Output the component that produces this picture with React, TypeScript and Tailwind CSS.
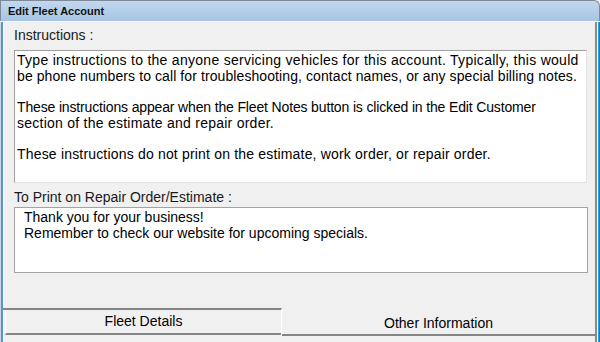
import React from 'react';

// per-line tracking so the Liberation widths line up with the original font
const notes = [
  { text: 'Type instructions to the anyone servicing vehicles for this account. Typically, this would', cls: 'tracking-[0.28px]' },
  { text: 'be phone numbers to call for troubleshooting, contact names, or any special billing notes.', cls: 'tracking-[0.09px]' },
  { text: '', cls: '' },
  { text: 'These instructions appear when the Fleet Notes button is clicked in the Edit Customer', cls: 'tracking-[-0.15px]' },
  { text: 'section of the estimate and repair order.', cls: 'tracking-[0.25px]' },
  { text: '', cls: '' },
  { text: 'These instructions do not print on the estimate, work order, or repair order.', cls: 'tracking-[0.18px]' },
];

const printLines = ['Thank you for your business!', 'Remember to check our website for upcoming specials.'];

export default function App() {
  return (
    <div className="w-[600px] h-[342px] flex flex-col bg-[#f0f0f0] overflow-hidden font-['Liberation_Sans',Arial,sans-serif] text-[14px] text-black">
      {/* title bar */}
      <div className="h-[21px] shrink-0 flex items-center pl-[7px] bg-gradient-to-b from-[#c2d8ee] to-[#a6c4e3] border-t border-r border-l border-[#7c8a99] rounded-tr-[6px]">
        <span className="text-[11px] font-bold text-[#111] leading-none">Edit Fleet Account</span>
      </div>
      <div className="h-px shrink-0 bg-[#f8f8f8]" />

      <div className="flex-1 flex min-h-0">
        <div className="w-[3px] shrink-0 border-l border-l-[#c8d6e4] bg-[#5b93d0]" />

        <div className="flex-1 flex flex-col border-l border-l-white border-r-2 border-r-[#8a8a8a]">
          <div className="pl-[10px] pt-[6px] leading-[15px] text-[#1a1a1a]">Instructions :</div>
          <div className="ml-[10px] mt-[7px] w-[573px] h-[133px] bg-white border border-t-[#a0a0a0] border-l-[#a0a0a0] border-b-[#e3e3e3] border-r-[#e3e3e3] pl-[2px] pt-[2px] leading-[15.7px]">
            {notes.map((line, i) => (
              <div key={i} className={`h-[15.7px] whitespace-pre ${line.cls}`}>{line.text}</div>
            ))}
          </div>

          <div className="pl-[10px] mt-[7px] leading-[15px] text-[#1a1a1a]">To Print on Repair Order/Estimate :</div>
          <div className="ml-[10px] mt-[2px] w-[574px] h-[66px] bg-white border border-[#a3a3a3] pl-[9px] pt-[1px] leading-[16px]">
            {printLines.map((line, i) => (
              <div key={i} className="h-[16px] whitespace-pre">{line}</div>
            ))}
          </div>

          {/* tabs */}
          <div className="mt-auto mb-[6px] h-[28px] flex">
            <div className="w-[279px] -ml-px h-[28px] flex border-t-2 border-t-[#858585] border-r border-r-white pl-[2px] pb-[1px]">
              <div className="flex-1 flex items-center justify-center border-l border-l-white border-b-2 border-b-[#858585]">
                Fleet Details
              </div>
            </div>
            <div className="flex-1 h-[28px] flex items-center justify-center pt-[5px] border-b-2 border-b-[#858585]">
              Other Information
            </div>
          </div>
        </div>

        <div className="w-[3px] shrink-0 flex">
          <div className="w-px bg-[#f4f4f4]" />
          <div className="w-px bg-[#2aa6ec]" />
          <div className="w-px bg-[#3a6e9e]" />
        </div>
      </div>
    </div>
  );
}
